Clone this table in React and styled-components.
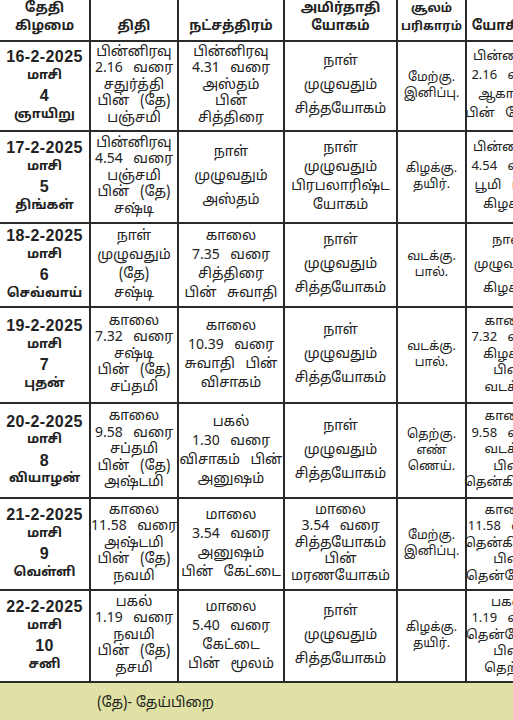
import React from "react";
import styled, { createGlobalStyle } from "styled-components";

const GlobalStyle = createGlobalStyle`
  html, body {
    margin: 0;
    padding: 0;
    background: #fff;
  }
  body {
    font-family: "Noto Sans Tamil", "Lohit Tamil", "Noto Sans", "Liberation Sans", sans-serif;
    color: #222;
  }
`;

const Page = styled.div`
  width: 513px;
  height: 720px;
  overflow: hidden;
  background: #fff;
`;

const Table = styled.div`
  width: 551px;
  display: grid;
  grid-template-columns: 91px 88px 106px 113px 69px 84px;
  grid-template-rows: 42px 90px 92px 84px 96px 95px 92px 92px;
`;

const Cell = styled.div`
  box-sizing: border-box;
  border-right: 2px solid #2a2a2a;
  border-bottom: 2px solid #2a2a2a;
  display: flex;
  flex-direction: column;
  align-items: center;
  justify-content: center;
  text-align: center;
  padding: 0 2px;
  font-size: ${(p) => p.$fs || 14}px;
  line-height: ${(p) => p.$lh}px;
  white-space: nowrap;
  word-spacing: 7px;
`;

const HeadCell = styled(Cell)`
  justify-content: flex-end;
  padding-bottom: 4px;
  font-weight: 700;
  word-spacing: 0;
`;

const DateCell = styled(Cell)`
  font-weight: 700;
  word-spacing: 0;
`;

const DateText = styled.span`
  font-family: "Liberation Sans", Arial, sans-serif;
  font-size: 16px;
  letter-spacing: 0.4px;
`;

const Footer = styled.div`
  box-sizing: border-box;
  height: 40px;
  padding-left: 97px;
  display: flex;
  align-items: center;
  background: #dfe2a4;
  font-size: 14px;
`;

const heads = [
  ["தேதி", "கிழமை"],
  ["திதி"],
  ["நட்சத்திரம்"],
  ["அமிர்தாதி", "யோகம்"],
  ["சூலம்", "பரிகாரம்"],
  ["யோகினி"],
];

const headSize = [13.5, 13.5, 13.5, 13.5, 12, 13.5];
const bodySize = [14, 14, 14, 12.5, 13];

const rows = [
  {
    date: "16-2-2025", day: "4", weekday: "ஞாயிறு",
    cells: [
      ["பின்னிரவு", "2.16 வரை", "சதுர்த்தி", "பின் (தே)", "பஞ்சமி"],
      ["பின்னிரவு", "4.31 வரை", "அஸ்தம்", "பின்", "சித்திரை"],
      ["நாள்", "முழுவதும்", "சித்தயோகம்"],
      ["மேற்கு.", "இனிப்பு."],
      ["பின்னிரவு", "2.16 வரை", "ஆகாயம்", "பின் மேற்கு"],
    ],
  },
  {
    date: "17-2-2025", day: "5", weekday: "திங்கள்",
    cells: [
      ["பின்னிரவு", "4.54 வரை", "பஞ்சமி", "பின் (தே)", "சஷ்டி"],
      ["நாள்", "முழுவதும்", "அஸ்தம்"],
      ["நாள்", "முழுவதும்", "பிரபலாரிஷ்ட", "யோகம்"],
      ["கிழக்கு.", "தயிர்."],
      ["பின்னிரவு", "4.54 வரை", "பூமி பின்", "கிழக்கு"],
    ],
  },
  {
    date: "18-2-2025", day: "6", weekday: "செவ்வாய்",
    cells: [
      ["நாள்", "முழுவதும்", "(தே)", "சஷ்டி"],
      ["காலை", "7.35 வரை", "சித்திரை", "பின் சுவாதி"],
      ["நாள்", "முழுவதும்", "சித்தயோகம்"],
      ["வடக்கு.", "பால்."],
      ["நாள்", "முழுவதும்", "கிழக்கு"],
    ],
  },
  {
    date: "19-2-2025", day: "7", weekday: "புதன்",
    cells: [
      ["காலை", "7.32 வரை", "சஷ்டி", "பின் (தே)", "சப்தமி"],
      ["காலை", "10.39 வரை", "சுவாதி பின்", "விசாகம்"],
      ["நாள்", "முழுவதும்", "சித்தயோகம்"],
      ["வடக்கு.", "பால்."],
      ["காலை", "7.32 வரை", "கிழக்கு", "பின்", "வடக்கு"],
    ],
  },
  {
    date: "20-2-2025", day: "8", weekday: "வியாழன்",
    cells: [
      ["காலை", "9.58 வரை", "சப்தமி", "பின் (தே)", "அஷ்டமி"],
      ["பகல்", "1.30 வரை", "விசாகம் பின்", "அனுஷம்"],
      ["நாள்", "முழுவதும்", "சித்தயோகம்"],
      ["தெற்கு.", "எண்", "ணெய்."],
      ["காலை", "9.58 வரை", "வடக்கு", "பின்", "தென்கிழக்கு"],
    ],
  },
  {
    date: "21-2-2025", day: "9", weekday: "வெள்ளி",
    cells: [
      ["காலை", "11.58 வரை", "அஷ்டமி", "பின் (தே)", "நவமி"],
      ["மாலை", "3.54 வரை", "அனுஷம்", "பின் கேட்டை"],
      ["மாலை", "3.54 வரை", "சித்தயோகம்", "பின்", "மரணயோகம்"],
      ["மேற்கு.", "இனிப்பு."],
      ["காலை", "11.58 வரை", "தென்கிழக்கு", "பின்", "தென்மேற்கு"],
    ],
  },
  {
    date: "22-2-2025", day: "10", weekday: "சனி",
    cells: [
      ["பகல்", "1.19 வரை", "நவமி", "பின் (தே)", "தசமி"],
      ["மாலை", "5.40 வரை", "கேட்டை", "பின் மூலம்"],
      ["நாள்", "முழுவதும்", "சித்தயோகம்"],
      ["கிழக்கு.", "தயிர்."],
      ["பகல்", "1.19 வரை", "தென்மேற்கு", "பின்", "தெற்கு"],
    ],
  },
];

// spacing between lines depends on how many lines share the cell
const lineHeight = (col, n) => {
  if (col === 3) return 16;
  if (n >= 5) return 16.5;
  if (n === 4) return 19;
  if (n === 3) return 24;
  return 18;
};

const Lines = ({ items }) =>
  items.map((t, i) => <span key={i}>{t}</span>);

export default function App() {
  return (
    <>
      <GlobalStyle />
      <Page>
        <Table>
          {heads.map((h, i) => (
            <HeadCell key={i} $lh={18} $fs={headSize[i]}>
              <Lines items={h} />
            </HeadCell>
          ))}
          {rows.map((r) => (
            <React.Fragment key={r.date}>
              <DateCell $lh={19.5} $fs={13}>
                <DateText>{r.date}</DateText>
                <span>மாசி</span>
                <DateText>{r.day}</DateText>
                <span>{r.weekday}</span>
              </DateCell>
              {r.cells.map((c, i) => (
                <Cell key={i} $lh={lineHeight(i, c.length)} $fs={bodySize[i]}>
                  <Lines items={c} />
                </Cell>
              ))}
            </React.Fragment>
          ))}
        </Table>
        <Footer>(தே)- தேய்பிறை</Footer>
      </Page>
    </>
  );
}
